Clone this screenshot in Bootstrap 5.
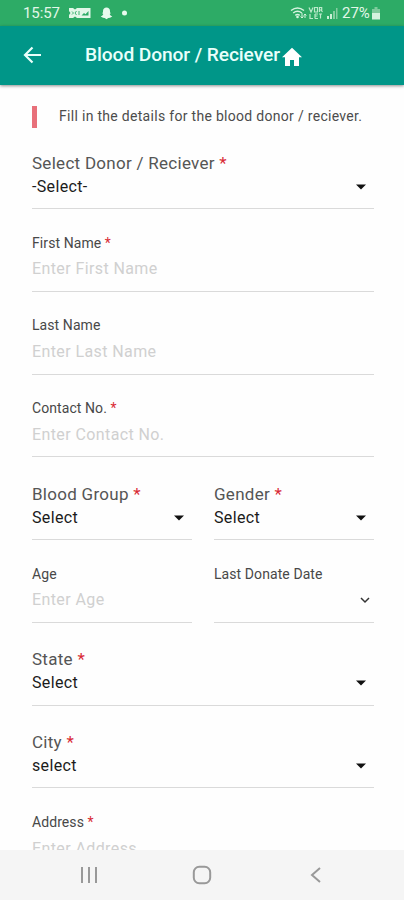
<!DOCTYPE html>
<html lang="en">
<head>
<meta charset="utf-8">
<meta name="viewport" content="width=device-width, initial-scale=1">
<title>Blood Donor / Reciever</title>
<link href="https://cdn.jsdelivr.net/npm/bootstrap@5.3.0/dist/css/bootstrap.min.css" rel="stylesheet">
<style>
body{font-family:Roboto,"Liberation Sans",sans-serif;background:#fefefe;height:900px;overflow:hidden}
svg{display:block;flex:none}
.status{height:26px;background:#2dab66;color:#e2f7e8;padding:0 19px 0 23px;font-size:15px;line-height:26px}
.status .clock{width:37px;letter-spacing:-.1px}
.appbar{height:58.5px;background:#009688;color:#e9fffb;padding:0 23px;box-shadow:0 1px 3px rgba(0,0,0,.45);z-index:1}
.appbar h1{font-size:19.2px;font-weight:500;margin:0 0 0 43px;line-height:58px;white-space:nowrap;width:196px;letter-spacing:-.1px}
.form-area{padding:21.500px 30px 0 32px;min-height:0}
.hint{height:22px;border-left:5px solid #e8707a;padding-left:22px;font-size:14px;line-height:21px;color:#4c4c4c;white-space:nowrap;letter-spacing:.3px;margin-bottom:-1.75px}
.field{height:82.75px;border-bottom:1.5px solid #dadada;line-height:20px;padding-bottom:11.3px}
.field .caption{font-size:14px;color:#484848;letter-spacing:.08px;margin-bottom:6.8px}
.field.pick .caption{font-size:17px;color:#555;letter-spacing:.28px;margin-bottom:4px}
.field .value{font-size:16px;color:#d0d0d0;letter-spacing:.4px;height:20px}
.field.pick .value{color:#1b1b1b;letter-spacing:.35px}
.req{color:#d92b35}
.pick svg{margin-right:8px}
.pair{--bs-gutter-x:22px}
.navkeys{height:50px;background:#f5f5f5;z-index:1}
</style>
<script src="https://cdn.jsdelivr.net/npm/bootstrap@5.3.0/dist/js/bootstrap.bundle.min.js"></script>
</head>
<body class="d-flex flex-column">
<div class="status d-flex align-items-center flex-shrink-0">
  <span class="clock">15:57</span>
  <svg class="ms-2" width="24" height="14" viewBox="0 0 24 14"><path d="M1 2h4l2 1.500L9 2h13.500v10H9l-2-1.500L5 12H1V9l1.500-2L1 5z" fill="#e2f7e8"/><path d="M4 5.500 5.500 7 4 8.500M8.500 5 7 7l1.500 2M11 5v4" fill="none" stroke="#2dab66" stroke-width=".9"/><path d="M13.500 9.500 16 7l1.500 1.200L20.500 5v4.500z" fill="#2dab66"/></svg>
  <svg class="ms-2" width="13" height="13" viewBox="0 0 13 13"><path d="M6.500.5C4.500.5 3 2 3 4v1.500L2 6l1.300 1C3 8.200 2 9 .7 9.500l2.300 1.200 1.700.3 1.800 1.300L8.300 11l1.700-.3 2.300-1.200C11 9 10 8.200 9.700 7L11 6l-1-.5V4c0-2-1.500-3.500-3.500-3.500z" fill="#e8faee"/></svg>
  <svg width="13" height="6" viewBox="0 0 13 6" style="margin-left:5px"><circle cx="6.500" cy="3" r="2.500" fill="#e8faee"/></svg>
  <svg class="ms-auto" width="17" height="14" viewBox="0 0 17 14"><g fill="none" stroke="#d5f3de" stroke-width="1.500"><path d="M1 4.500q6.500-5 13 0M3.200 7q4.300-3.300 8.600 0M5.300 9.300q2.200-1.600 4.400 0"/><path d="M12 7v5m-1.500-1.500L12 12l1.500-1.500M15 12V8m-1.300 1.500L15 8l1.300 1.500" stroke-width="1"/></g><circle cx="7.500" cy="11" r="1.300" fill="#d5f3de"/></svg>
  <svg width="16" height="14" viewBox="0 0 16 14" style="margin:0 2px 0 1px"><g fill="none" stroke="#bceacb" stroke-width="1.200"><path d="M1 1.500 3 6l2-4.500M6.500 1.500h3V6h-3zM11.500 6V1.500h2.200V4h-2M13 4l1.500 2M2 8v4.500h3M7 8v4.500M7 8h3M7 10h2.500M7 12.500h3M11 8h3M12.500 8v4.500"/></g></svg>
  <svg width="12" height="12" viewBox="0 0 12 12"><path d="M1 12V9h2v3zM4 12V7h2v5z" fill="#c9efd5"/><path d="M7 12V4h2v8zM10 12V1h1.500v11z" fill="#84cda0"/></svg>
  <span style="margin-left:4px;width:29px">27%</span>
  <svg width="10" height="13" viewBox="0 0 10 13" class="me-1"><path d="M3.500 0h3v2H9v4H1V2h2.500z" fill="#7fcb9c"/><path d="M1 6h8v6.500H1z" fill="#d5f3de"/></svg>
</div>
<header class="appbar d-flex align-items-center flex-shrink-0 position-relative">
  <svg width="19" height="18" viewBox="0 0 19 18"><path d="M18 9H2M9.500 1.500 2 9l7.500 7.500" fill="none" stroke="#e9fffb" stroke-width="2.200"/></svg>
  <h1>Blood Donor / Reciever</h1>
  <svg width="22" height="20" viewBox="0 0 22 20" style="margin-top:4px"><path d="M11 .7 1 10.200h3V19h5v-6h4v6h5v-8.800h3z" fill="#fff"/></svg>
</header>
<main class="form-area flex-grow-1 overflow-hidden">
  <p class="hint">Fill in the details for the blood donor / reciever.</p>
  <div class="field pick d-flex flex-column justify-content-end">
    <div class="caption">Select Donor / Reciever <span class="req">*</span></div>
    <div class="value d-flex justify-content-between align-items-center"><span>-Select-</span><svg width="10" height="6" viewBox="0 0 10 6"><path d="M0 .5h10L5 5.500z" fill="#111"/></svg></div>
  </div>
  <div class="field d-flex flex-column justify-content-end">
    <div class="caption">First Name <span class="req">*</span></div>
    <div class="value">Enter First Name</div>
  </div>
  <div class="field d-flex flex-column justify-content-end">
    <div class="caption">Last Name</div>
    <div class="value">Enter Last Name</div>
  </div>
  <div class="field d-flex flex-column justify-content-end">
    <div class="caption">Contact No. <span class="req">*</span></div>
    <div class="value">Enter Contact No.</div>
  </div>
  <div class="row pair">
    <div class="col-6">
      <div class="field pick d-flex flex-column justify-content-end">
        <div class="caption">Blood Group <span class="req">*</span></div>
        <div class="value d-flex justify-content-between align-items-center"><span>Select</span><svg width="10" height="6" viewBox="0 0 10 6"><path d="M0 .5h10L5 5.500z" fill="#111"/></svg></div>
      </div>
    </div>
    <div class="col-6">
      <div class="field pick d-flex flex-column justify-content-end">
        <div class="caption">Gender <span class="req">*</span></div>
        <div class="value d-flex justify-content-between align-items-center"><span>Select</span><svg width="10" height="6" viewBox="0 0 10 6"><path d="M0 .5h10L5 5.500z" fill="#111"/></svg></div>
      </div>
    </div>
    <div class="col-6">
      <div class="field d-flex flex-column justify-content-end">
        <div class="caption">Age</div>
        <div class="value">Enter Age</div>
      </div>
    </div>
    <div class="col-6">
      <div class="field d-flex flex-column justify-content-end">
        <div class="caption">Last Donate Date</div>
        <div class="value d-flex justify-content-end align-items-center"><svg class="me-1" width="10" height="7" viewBox="0 0 10 7"><path d="M1 1l4 4 4-4" fill="none" stroke="#333" stroke-width="1.500"/></svg></div>
      </div>
    </div>
  </div>
  <div class="field pick d-flex flex-column justify-content-end">
    <div class="caption">State <span class="req">*</span></div>
    <div class="value d-flex justify-content-between align-items-center"><span>Select</span><svg width="10" height="6" viewBox="0 0 10 6"><path d="M0 .5h10L5 5.500z" fill="#111"/></svg></div>
  </div>
  <div class="field pick d-flex flex-column justify-content-end">
    <div class="caption">City <span class="req">*</span></div>
    <div class="value d-flex justify-content-between align-items-center"><span>select</span><svg width="10" height="6" viewBox="0 0 10 6"><path d="M0 .5h10L5 5.500z" fill="#111"/></svg></div>
  </div>
  <div class="field d-flex flex-column justify-content-end">
    <div class="caption">Address <span class="req">*</span></div>
    <div class="value">Enter Address</div>
  </div>
</main>
<nav class="navkeys flex-shrink-0 d-flex align-items-center">
  <svg width="18" height="16" viewBox="0 0 18 16" style="margin-left:80px"><path d="M2 0v16M9 0v16M16 0v16" stroke="#999" stroke-width="2"/></svg>
  <svg width="20" height="20" viewBox="0 0 20 20" style="margin:0 98px 0 94px"><rect x="1.800" y="1.800" width="16.400" height="16.400" rx="5.500" fill="none" stroke="#999" stroke-width="2"/></svg>
  <svg width="12" height="16" viewBox="0 0 12 16"><path d="M10 1 2 8l8 7" fill="none" stroke="#999" stroke-width="2"/></svg>
</nav>
</body>
</html>
